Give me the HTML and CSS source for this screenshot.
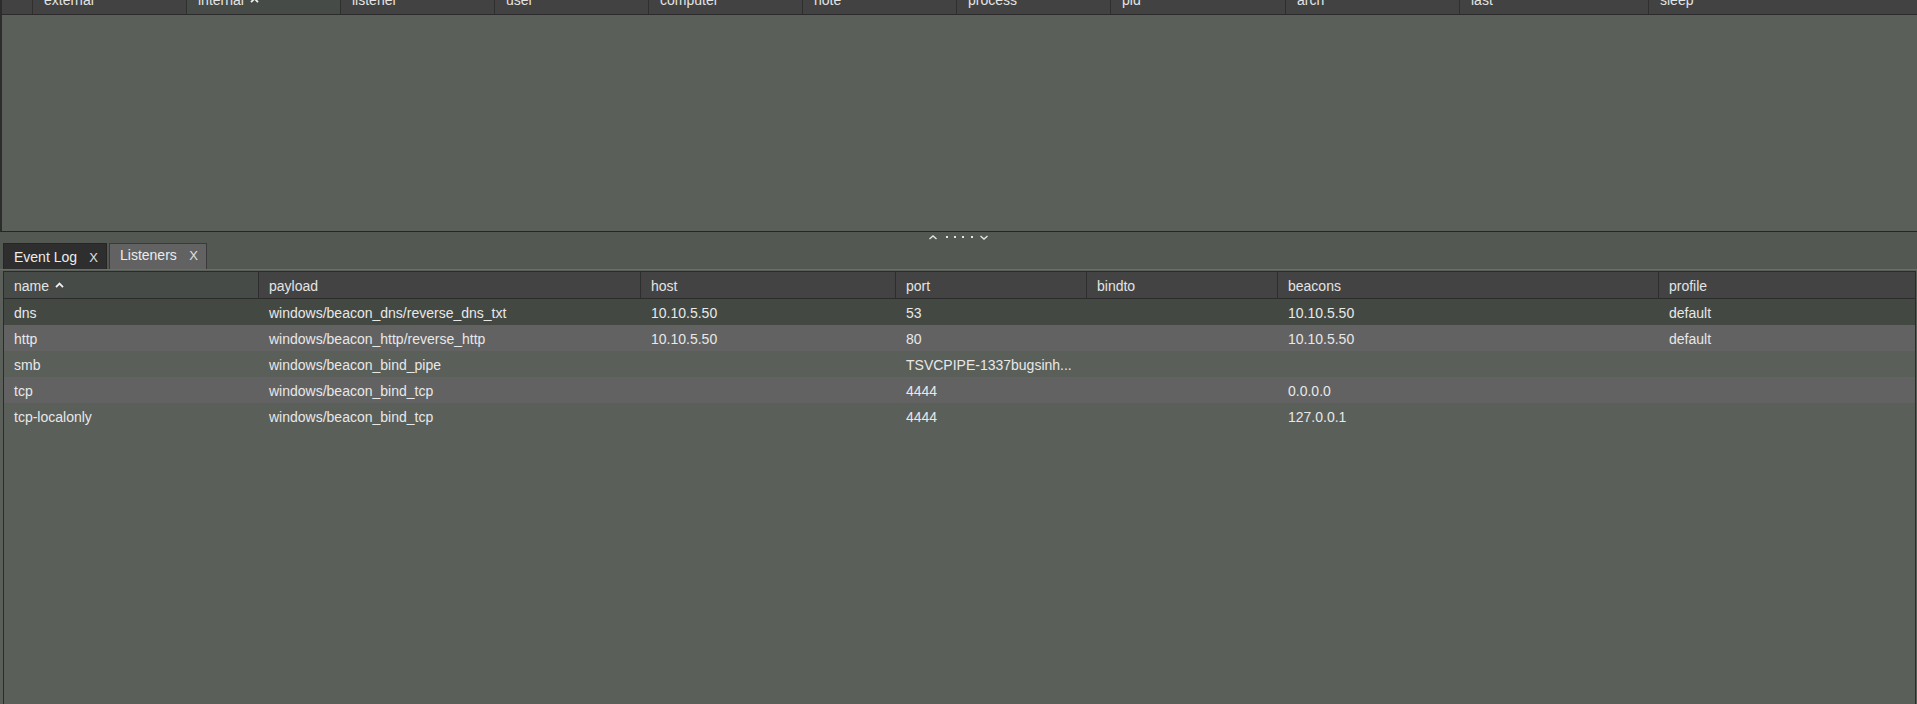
FILE: index.html
```html
<!DOCTYPE html>
<html>
<head>
<meta charset="utf-8">
<link rel="stylesheet" href="styles.css">
</head>
<body>
<div class="top-pane">
  <div class="top-header">
    <div class="th th-first"></div>
    <div class="th w154">external</div>
    <div class="th w154 sorted">internal <svg class="sort" width="9" height="6" viewBox="0 0 9 6"><polyline points="1,5.2 4.5,1.6 8,5.2" fill="none" stroke="#f0f0f0" stroke-width="1.8"/></svg></div>
    <div class="th w154">listener</div>
    <div class="th w154">user</div>
    <div class="th w154">computer</div>
    <div class="th w154">note</div>
    <div class="th w154">process</div>
    <div class="th w175">pid</div>
    <div class="th w174">arch</div>
    <div class="th w189">last</div>
    <div class="th th-last">sleep</div>
  </div>
</div>
<div class="splitter">
  <div class="grip">
    <svg width="60" height="5" viewBox="0 0 60 5">
      <polyline points="0.5,4 4,1 7.5,4" fill="none" stroke="#e6e6e6" stroke-width="1.4"/>
      <rect x="17" y="1" width="2" height="2" fill="#e6e6e6"/>
      <rect x="25" y="1" width="2" height="2" fill="#e6e6e6"/>
      <rect x="33" y="1" width="2" height="2" fill="#e6e6e6"/>
      <rect x="42" y="1" width="2" height="2" fill="#e6e6e6"/>
      <polyline points="51.5,1 55,4 58.5,1" fill="none" stroke="#e6e6e6" stroke-width="1.4"/>
    </svg>
  </div>
</div>
<div class="tabs">
  <div class="tab tab-inactive"><span class="tab-label">Event Log</span><span class="tab-x">X</span></div>
  <div class="tab tab-active"><span class="tab-label">Listeners</span><span class="tab-x">X</span></div>
</div>
<div class="panel">
  <div class="table">
    <div class="row head">
      <div class="cell hcell sorted">name <svg class="sort" width="9" height="6" viewBox="0 0 9 6"><polyline points="1,5.2 4.5,1.6 8,5.2" fill="none" stroke="#f0f0f0" stroke-width="1.8"/></svg></div>
      <div class="cell hcell">payload</div>
      <div class="cell hcell">host</div>
      <div class="cell hcell">port</div>
      <div class="cell hcell">bindto</div>
      <div class="cell hcell">beacons</div>
      <div class="cell hcell last">profile</div>
    </div>
    <div class="row selected">
      <div class="cell">dns</div>
      <div class="cell">windows/beacon_dns/reverse_dns_txt</div>
      <div class="cell">10.10.5.50</div>
      <div class="cell">53</div>
      <div class="cell"></div>
      <div class="cell">10.10.5.50</div>
      <div class="cell">default</div>
    </div>
    <div class="row alt">
      <div class="cell">http</div>
      <div class="cell">windows/beacon_http/reverse_http</div>
      <div class="cell">10.10.5.50</div>
      <div class="cell">80</div>
      <div class="cell"></div>
      <div class="cell">10.10.5.50</div>
      <div class="cell">default</div>
    </div>
    <div class="row">
      <div class="cell">smb</div>
      <div class="cell">windows/beacon_bind_pipe</div>
      <div class="cell"></div>
      <div class="cell">TSVCPIPE-1337bugsinh...</div>
      <div class="cell"></div>
      <div class="cell"></div>
      <div class="cell"></div>
    </div>
    <div class="row alt">
      <div class="cell">tcp</div>
      <div class="cell">windows/beacon_bind_tcp</div>
      <div class="cell"></div>
      <div class="cell">4444</div>
      <div class="cell"></div>
      <div class="cell">0.0.0.0</div>
      <div class="cell"></div>
    </div>
    <div class="row">
      <div class="cell">tcp-localonly</div>
      <div class="cell">windows/beacon_bind_tcp</div>
      <div class="cell"></div>
      <div class="cell">4444</div>
      <div class="cell"></div>
      <div class="cell">127.0.0.1</div>
      <div class="cell"></div>
    </div>
  </div>
</div>
</body>
</html>
```

FILE: styles.css
```css
* { box-sizing: border-box; }

html, body {
  margin: 0;
  padding: 0;
  height: 100%;
  overflow: hidden;
}

body {
  background: #535853;
  font-family: "Liberation Sans", Arial, sans-serif;
  font-size: 14px;
  color: #e8e8e8;
  display: flex;
  flex-direction: column;
}

/* ---------- top pane ---------- */
.top-pane {
  height: 232px;
  flex: none;
  background: #5a5f5a;
  border-left: 2px solid #2c2c2c;
  border-bottom: 1px solid #262626;
  overflow: hidden;
}

.top-header {
  display: flex;
  height: 28px;
  margin-top: -13px;
  background: #424242;
  border-bottom: 1px solid #2b2b2b;
}

.th {
  flex: none;
  height: 27px;
  line-height: 27px;
  padding-left: 11px;
  border-right: 1px solid #2f2f2f;
  color: #e4e4e4;
  white-space: nowrap;
  display: flex;
  align-items: center;
  gap: 6px;
}

.th-first { width: 31px; padding: 0; }
.w154 { width: 154px; }
.w175 { width: 175px; }
.w174 { width: 174px; }
.w189 { width: 189px; }
.th-last { flex: 1; border-right: none; }
.th.sorted { background: #474b47; }

.sort { display: block; margin-top: -2px; }

/* ---------- splitter ---------- */
.splitter {
  height: 11px;
  flex: none;
  display: flex;
  justify-content: center;
  align-items: flex-start;
  padding-top: 3px;
}

.grip svg { display: block; margin-left: 1px; }

/* ---------- tabs ---------- */
.tabs {
  height: 26px;
  flex: none;
  display: flex;
  align-items: stretch;
  padding-left: 3px;
  gap: 2px;
}

.tab {
  display: flex;
  align-items: center;
  padding-left: 10px;
  border: 1px solid #262626;
  border-bottom: none;
  white-space: nowrap;
}

.tab-inactive {
  width: 104px;
  background: #2e2e2e;
  padding-top: 1px;
}

.tab-active {
  width: 98px;
  background: #626262;
  border-color: #3a3a3a;
  padding-bottom: 3px;
}

.tab-label { color: #ececec; }

.tab-x {
  margin-left: auto;
  margin-right: 8px;
  font-size: 13px;
  color: #e0e0e0;
}

/* ---------- panel / table ---------- */
.panel {
  flex: 1;
  background: #5a5f5a;
  border-top: 1px solid #6c6c6c;
  padding: 1px 1px 0 3px;
  display: flex;
  flex-direction: column;
}

.table {
  flex: 1;
  border: 1px solid #2b2b2b;
  border-bottom: none;
  background: #5a5f5a;
}

.row {
  display: grid;
  grid-template-columns: 255px 382px 255px 191px 191px 381px 1fr;
  height: 26px;
}

.row.head {
  height: 27px;
  background: #434343;
  border-bottom: 1px solid #2b2b2b;
}

.row.selected { background: #434843; }
.row.alt { background: #626262; }

.cell {
  padding-left: 10px;
  padding-top: 1px;
  line-height: 26px;
  height: 26px;
  white-space: nowrap;
  overflow: hidden;
  color: #e8e8e8;
}

.hcell {
  border-right: 1px solid #2e2e2e;
  display: flex;
  align-items: center;
  gap: 6px;
  color: #e4e4e4;
}

.hcell.sorted { background: #474b47; }
.hcell.last { border-right: none; }
```
